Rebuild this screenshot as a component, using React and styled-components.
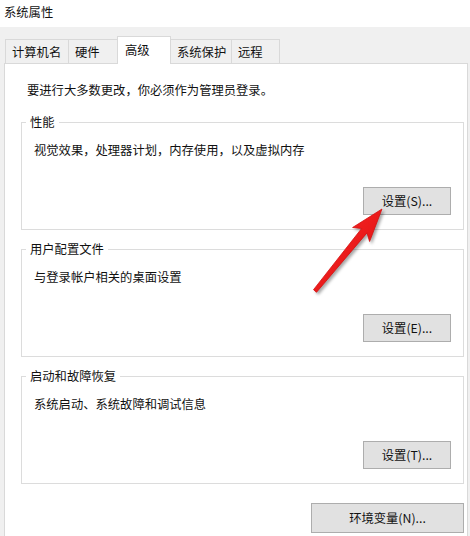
import React from "react";
import styled, { createGlobalStyle } from "styled-components";

const Global = createGlobalStyle`
  html, body { margin: 0; padding: 0; }
  body {
    width: 470px;
    height: 536px;
    overflow: hidden;
    background: #f0f0f0;
    font-family: "Noto Sans CJK SC", "Microsoft YaHei", sans-serif;
    color: #111;
  }
  * { box-sizing: border-box; }
`;

const Window = styled.div`
  position: relative;
  width: 470px;
  height: 536px;
  overflow: hidden;
  background: #f0f0f0;
  display: flex;
  flex-direction: column;
  font-size: 12.3px;
`;

const TitleBar = styled.div`
  height: 27px;
  background: #ffffff;
  padding-left: 4px;
  line-height: 24px;
  flex: none;
`;

const TabRow = styled.div`
  display: flex;
  align-items: flex-end;
  height: 27px;
  margin-top: 9px;
  padding-left: 5px;
  position: relative;
  z-index: 1;
  flex: none;
`;

const Tab = styled.div`
  width: ${(p) => p.$w}px;
  height: ${(p) => (p.$active ? 28 : 24)}px;
  margin-left: -1px;
  margin-bottom: ${(p) => (p.$active ? -1 : 0)}px;
  &:first-child { margin-left: 0; }
  border: 1px solid #d9d9d9;
  border-bottom: none;
  background: ${(p) => (p.$active ? "#ffffff" : "#f0f0f0")};
  position: relative;
  z-index: ${(p) => (p.$active ? 2 : 1)};
  display: flex;
  align-items: center;
  padding-left: ${(p) => (p.$active ? 7 : 6)}px;
  padding-bottom: ${(p) => (p.$active ? 2 : 0)}px;
  white-space: nowrap;
`;

const Panel = styled.div`
  margin-left: 4px;
  width: 464px;
  flex: 1;
  background: #ffffff;
  border: 1px solid #d9d9d9;
  border-bottom: none;
  padding: 17px 3px 0 16px;
  display: flex;
  flex-direction: column;
`;

const Note = styled.div`
  padding-left: 6px;
  line-height: 18px;
`;

const Group = styled.div`
  position: relative;
  height: 108px;
  margin-top: ${(p) => p.$mt}px;
  border: 1px solid #dcdcdc;
  padding: 18px 12px 0 12px;
  display: flex;
  flex-direction: column;
`;

const Legend = styled.span`
  position: absolute;
  top: -10px;
  left: 4px;
  padding: 0 4px;
  line-height: 18px;
  background: #ffffff;
`;

const Desc = styled.div`
  line-height: 18px;
`;

const Button = styled.button`
  font: inherit;
  color: #111;
  width: ${(p) => p.$w}px;
  height: ${(p) => p.$h || 28}px;
  margin-top: ${(p) => p.$mt}px;
  align-self: flex-end;
  background: #e1e1e1;
  border: 1px solid #adadad;
  border-radius: 0;
  padding: 0;
  display: flex;
  align-items: center;
  justify-content: center;
`;

const Arrow = styled.svg`
  position: absolute;
  left: 300px;
  top: 200px;
  width: 100px;
  height: 100px;
  overflow: visible;
  filter: drop-shadow(2px 2px 1.5px rgba(0, 0, 0, 0.35));
  pointer-events: none;
`;

const tabs = [
  { label: "计算机名", w: 64 },
  { label: "硬件", w: 50 },
  { label: "高级", w: 54, active: true },
  { label: "系统保护", w: 62 },
  { label: "远程", w: 49 },
];

export default function App() {
  return (
    <>
      <Global />
      <Window>
        <TitleBar>系统属性</TitleBar>
        <TabRow>
          {tabs.map((t) => (
            <Tab key={t.label} $w={t.w} $active={t.active}>
              {t.label}
            </Tab>
          ))}
        </TabRow>
        <Panel>
          <Note>要进行大多数更改，你必须作为管理员登录。</Note>
          <Group $mt={23}>
            <Legend>性能</Legend>
            <Desc>视觉效果，处理器计划，内存使用，以及虚拟内存</Desc>
            <Button $w={88} $mt={28}>设置(S)...</Button>
          </Group>
          <Group $mt={19}>
            <Legend>用户配置文件</Legend>
            <Desc>与登录帐户相关的桌面设置</Desc>
            <Button $w={88} $mt={28}>设置(E)...</Button>
          </Group>
          <Group $mt={19}>
            <Legend>启动和故障恢复</Legend>
            <Desc>系统启动、系统故障和调试信息</Desc>
            <Button $w={88} $mt={28}>设置(T)...</Button>
          </Group>
          <Button $w={153} $h={30} $mt={19}>环境变量(N)...</Button>
        </Panel>
        <Arrow viewBox="0 0 100 100">
          <defs>
            <linearGradient id="ag" x1="0" y1="0" x2="1" y2="1">
              <stop offset="0" stopColor="#ff2a2a" />
              <stop offset="1" stopColor="#d80d0d" />
            </linearGradient>
          </defs>
          <polygon
            points="82,9 69.6,41.5 67.0,32.9 16.5,92.3 13.5,89.7 61.6,28.5 52.6,27.5"
            fill="url(#ag)"
            stroke="#d40f0f"
            strokeWidth="0.8"
            strokeLinejoin="round"
          />
        </Arrow>
      </Window>
    </>
  );
}
